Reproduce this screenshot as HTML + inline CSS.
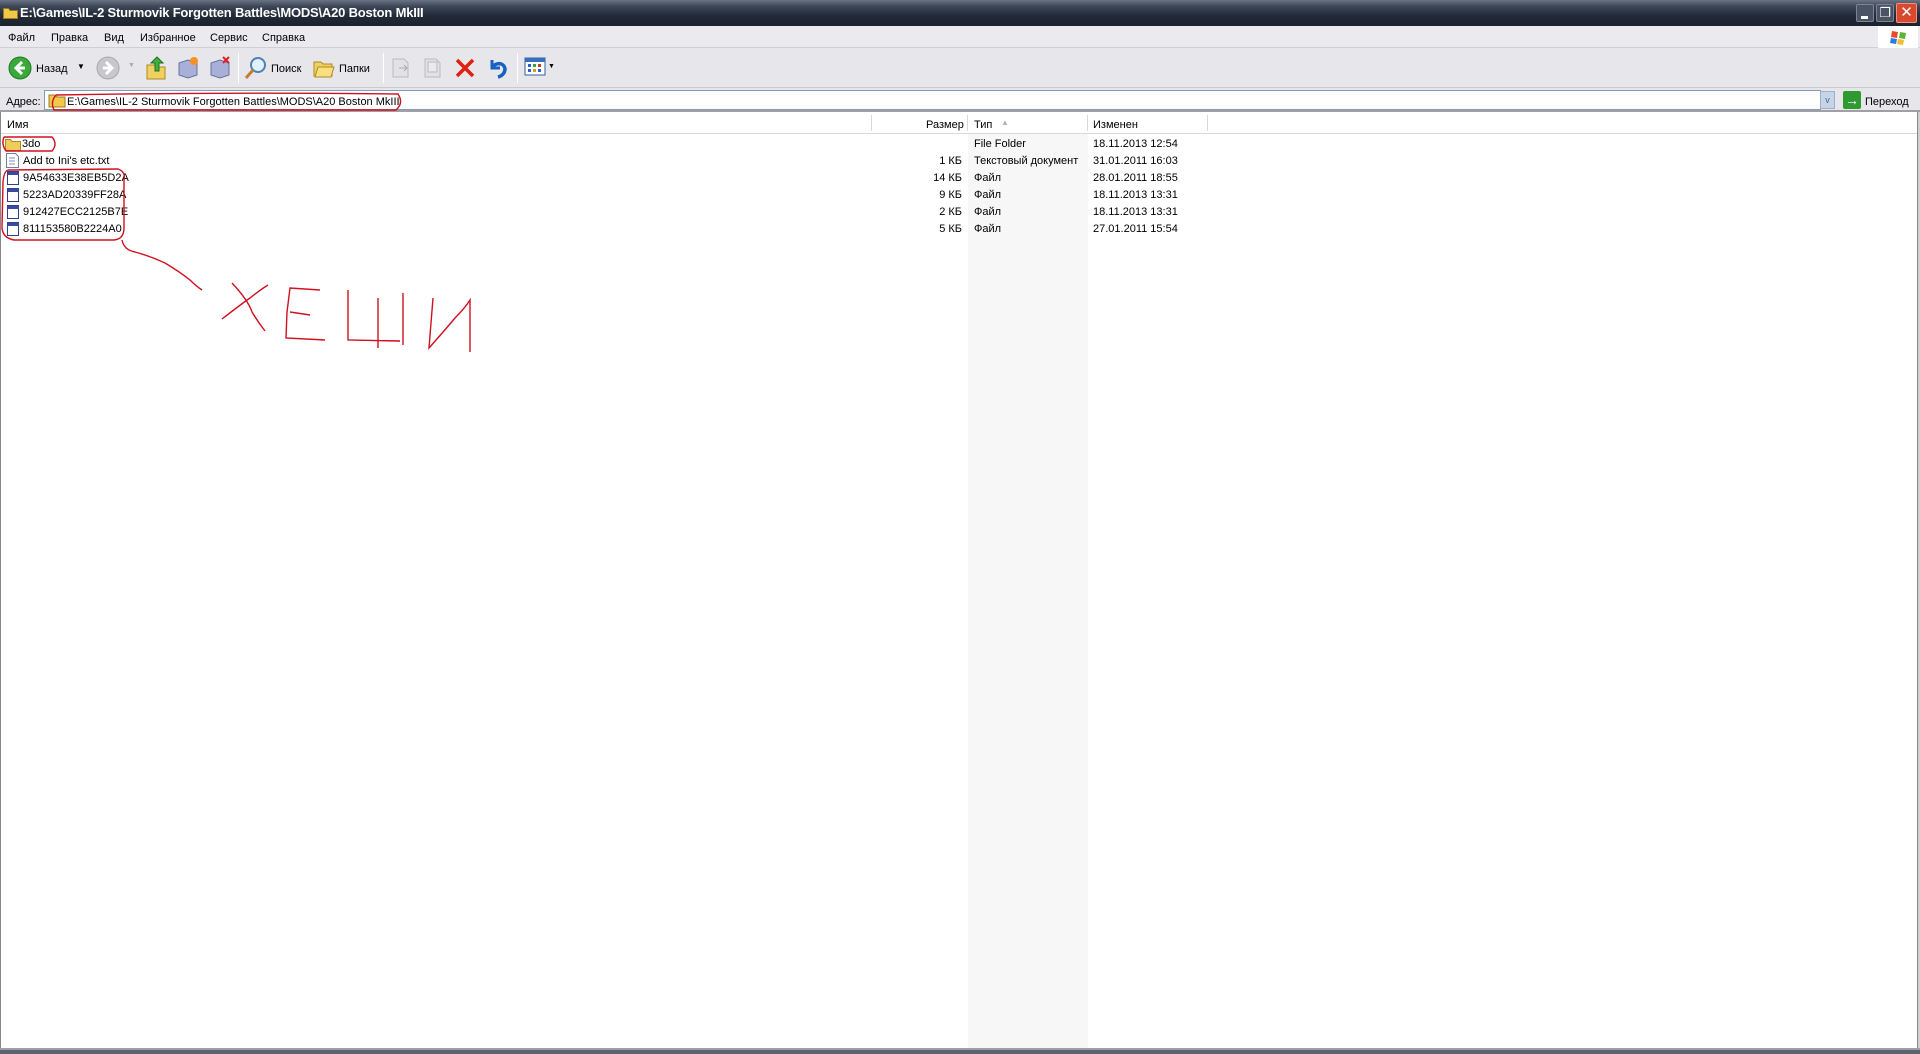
<!DOCTYPE html>
<html><head><meta charset="utf-8"><style>
*{margin:0;padding:0;box-sizing:border-box}
body{width:1920px;height:1054px;overflow:hidden;background:#fff;font-family:"Liberation Sans","DejaVu Sans",sans-serif;font-size:11px;color:#000;position:relative}
.abs{position:absolute}
#title{left:0;top:0;width:1920px;height:26px;background:linear-gradient(#6a7384 0,#3c4656 25%,#222b38 60%,#1b2230 100%)}
#title .t{left:20px;top:5px;color:#fff;font-weight:bold;font-size:13px;letter-spacing:-0.2px}
#menu{left:0;top:26px;width:1920px;height:22px;background:#ebeaee;border-bottom:1px solid #cfcfd4}
#menu span{position:absolute;top:6px}
#tool{left:0;top:48px;width:1920px;height:40px;background:#e7e6ea;border-bottom:1px solid #c9c9ce}
.sep{position:absolute;top:5px;width:1px;height:30px;background:#c4c4c8;border-right:1px solid #fff}
#addr{left:0;top:88px;width:1920px;height:24px;background:#e7e6ea;border-bottom:2px solid #a0a0a4}
#hdr{left:1px;top:112px;width:1916px;height:22px;background:#fff;border-bottom:1px solid #d8d8dc}
#hdr span{position:absolute;top:7px}
.col{position:absolute;top:3px;width:1px;height:16px;background:#d8d8dc}
.row{position:absolute;height:17px;line-height:17px}
</style></head><body>
<div id="title" class="abs">
<svg class="abs" style="left:3px;top:6px" width="15" height="13"><path d="M0.5 2.5h5l1.5 2h7.5v8h-14z" fill="#f0c84a" stroke="#a07a20"/></svg>
<div class="abs t">E:\Games\IL-2 Sturmovik Forgotten Battles\MODS\A20 Boston MkIII</div>
<div class="abs" style="left:1856px;top:4px;width:18px;height:18px;background:#4a5464;border:1px solid #7a8494;border-radius:2px"><div class="abs" style="left:4px;top:11px;width:7px;height:3px;background:#fff"></div></div>
<div class="abs" style="left:1876px;top:4px;width:18px;height:18px;background:#4a5464;border:1px solid #7a8494;border-radius:2px;color:#fff;font-size:13px;line-height:16px;text-align:center">&#x2750;</div>
<div class="abs" style="left:1896px;top:3px;width:21px;height:20px;background:#d9492f;border:1px solid #f09080;border-radius:2px;color:#fff;font-size:15px;font-weight:bold;line-height:18px;text-align:center">✕</div>
</div>
<div id="menu" class="abs">
<span style="left:8px">Файл</span><span style="left:51px">Правка</span><span style="left:104px">Вид</span><span style="left:140px">Избранное</span><span style="left:210px">Сервис</span><span style="left:262px">Справка</span>
<div class="abs" style="left:1878px;top:0;width:40px;height:22px;background:#fff"></div>
<svg class="abs" style="left:1890px;top:3px" width="18" height="16"><path d="M2 2l6 1-1 6-6-1z" fill="#e84a2a"/><path d="M10 3l6 1-1 6-6-1z" fill="#5ab43a"/><path d="M1 9l6 1-1 5-6-1z" fill="#2a7ae0"/><path d="M8 10l6 1-1 5-6-1z" fill="#f0c030"/></svg>
</div>
<div id="tool" class="abs">
<svg class="abs" style="left:8px;top:8px" width="24" height="24"><circle cx="12" cy="12" r="11" fill="#3aa83a" stroke="#1f7a1f"/><path d="M14 6l-6 6 6 6M8 12h9" stroke="#fff" stroke-width="3" fill="none"/></svg>
<span class="abs" style="left:36px;top:15px">Назад</span>
<span class="abs" style="left:77px;top:14px;font-size:8px">▼</span>
<svg class="abs" style="left:96px;top:8px" width="24" height="24"><circle cx="12" cy="12" r="11" fill="#c8c8cc" stroke="#a8a8ac"/><path d="M10 6l6 6-6 6M16 12h-9" stroke="#fff" stroke-width="3" fill="none"/></svg>
<span class="abs" style="left:128px;top:14px;font-size:7px;color:#aaa">▼</span>
<svg class="abs" style="left:145px;top:7px" width="24" height="26"><path d="M2 10h7l2 2h9v12H2z" fill="#f0d060" stroke="#b08a20"/><path d="M12 2l6 6h-4v8h-4V8H6z" fill="#40b040" stroke="#207020"/></svg>
<svg class="abs" style="left:176px;top:7px" width="24" height="26"><path d="M3 8l9-3 9 3v12l-9 3-9-3z" fill="#a8b0d8" stroke="#6870a0"/><circle cx="18" cy="6" r="4" fill="#ff9020"/></svg>
<svg class="abs" style="left:208px;top:7px" width="24" height="26"><path d="M3 8l9-3 9 3v12l-9 3-9-3z" fill="#a8b0d8" stroke="#6870a0"/><path d="M15 2l6 6M21 2l-6 6" stroke="#e02020" stroke-width="2"/></svg>
<div class="sep" style="left:238px"></div>
<svg class="abs" style="left:243px;top:7px" width="26" height="26"><circle cx="15" cy="10" r="7" fill="#e0f0ff" stroke="#5080b0" stroke-width="2"/><path d="M10 15l-7 8" stroke="#c08030" stroke-width="3"/></svg>
<span class="abs" style="left:271px;top:15px">Поиск</span>
<svg class="abs" style="left:312px;top:8px" width="24" height="24"><path d="M2 6h7l2 2h9v12H2z" fill="#f0d060" stroke="#b08a20"/><path d="M6 11h16l-3 10H3z" fill="#f8e080" stroke="#b08a20"/></svg>
<span class="abs" style="left:339px;top:15px">Папки</span>
<div class="sep" style="left:383px"></div>
<svg class="abs" style="left:389px;top:8px" width="24" height="24" opacity=".45"><path d="M4 3h11l4 4v14H4z" fill="#ddd" stroke="#888"/><path d="M10 12h8l-3-3M18 12l-3 3" stroke="#666" fill="none"/></svg>
<svg class="abs" style="left:421px;top:8px" width="24" height="24" opacity=".45"><path d="M4 3h11l4 4v14H4z" fill="#ddd" stroke="#888"/><path d="M7 6h9v10H7z" fill="#eee" stroke="#888"/></svg>
<svg class="abs" style="left:454px;top:9px" width="22" height="22"><path d="M3 3l16 16M19 3L3 19" stroke="#e02010" stroke-width="3.5"/></svg>
<svg class="abs" style="left:486px;top:8px" width="24" height="24"><path d="M6 4v8h8" stroke="#1a60c0" stroke-width="3" fill="none"/><path d="M6 12c3-6 12-6 13 1 0 4-3 7-7 8" stroke="#1a60c0" stroke-width="3.5" fill="none"/></svg>
<div class="sep" style="left:517px"></div>
<svg class="abs" style="left:524px;top:9px" width="22" height="20"><rect x="1" y="1" width="20" height="17" fill="#fff" stroke="#3060a0"/><rect x="1" y="1" width="20" height="4" fill="#3a70c0"/><rect x="4" y="7" width="3" height="3" fill="#3060c0"/><rect x="9" y="7" width="3" height="3" fill="#40a040"/><rect x="14" y="7" width="3" height="3" fill="#c04030"/><rect x="4" y="12" width="3" height="3" fill="#3060c0"/><rect x="9" y="12" width="3" height="3" fill="#d0a020"/><rect x="14" y="12" width="3" height="3" fill="#3060c0"/></svg>
<span class="abs" style="left:548px;top:15px;font-size:7px">▼</span>
</div>
<div id="addr" class="abs">
<span class="abs" style="left:6px;top:8px">Адрес:</span>
<div class="abs" style="left:44px;top:2px;width:1777px;height:20px;background:#fff;border:1px solid #7f9db9"></div>
<svg class="abs" style="left:48px;top:5px" width="18" height="15"><path d="M1 2h6l2 2h8v10H1z" fill="#f0c84a" stroke="#a07a20"/></svg>
<span class="abs" style="left:67px;top:8px">E:\Games\IL-2 Sturmovik Forgotten Battles\MODS\A20 Boston MkIII</span>
<div class="abs" style="left:1820px;top:3px;width:15px;height:18px;background:#c6d4ea;border:1px solid #9cb0d0;color:#4d6185;font-size:9px;text-align:center;line-height:16px">v</div>
<div class="abs" style="left:1843px;top:3px;width:18px;height:18px;background:#2f9a2f;border-radius:2px;color:#fff;font-size:14px;font-weight:bold;line-height:18px;text-align:center">→</div>
<span class="abs" style="left:1865px;top:8px">Переход</span>
</div>
<div class="abs" style="left:0;top:112px;width:1px;height:936px;background:#888"></div>
<div class="abs" style="left:1917px;top:112px;width:3px;height:936px;background:#d0d0d4;border-left:1px solid #888"></div>
<div class="abs" style="left:968px;top:134px;width:120px;height:914px;background:#f7f7f7"></div>
<div id="hdr" class="abs">
<span style="left:6px">Имя</span>
<div class="col" style="left:870px"></div>
<span style="left:925px">Размер</span>
<div class="col" style="left:966px"></div>
<span style="left:973px">Тип</span><span style="left:1000px;top:6px;font-size:8px;color:#b0b0b8">▲</span>
<div class="col" style="left:1086px"></div>
<span style="left:1092px">Изменен</span>
<div class="col" style="left:1206px"></div>
</div>
<div class="abs" style="left:0;top:1048px;width:1920px;height:2px;background:#a0a0a4"></div>
<div class="abs" style="left:0;top:1050px;width:1920px;height:4px;background:#5a6474"></div>

<svg class="abs" style="left:5px;top:137px" width="16" height="14"><path d="M0.5 2.5h5l1.5 2h8.5v9H0.5z" fill="#f0cc5a" stroke="#b08a20"/></svg>
<div class="row" style="left:22px;top:136px">3do</div>
<svg class="abs" style="left:6px;top:153px" width="13" height="15"><path d="M0.5 0.5h9l3 3v11h-12z" fill="#fff" stroke="#7080a0"/><path d="M3 5h6M3 8h6M3 11h6" stroke="#8090b0"/></svg>
<div class="row" style="left:23px;top:153px">Add to Ini's etc.txt</div>
<div class="row" style="left:23px;top:170px">9A54633E38EB5D2A</div>
<div class="row" style="left:23px;top:187px">5223AD20339FF28A</div>
<div class="row" style="left:23px;top:204px">912427ECC2125B7E</div>
<div class="row" style="left:23px;top:221px">811153580B2224A0</div>
<svg class="abs" style="left:7px;top:171px" width="13" height="70"><g fill="#fff" stroke="#30408a"><rect x=".5" y=".5" width="11" height="13"/><rect x=".5" y="17.5" width="11" height="13"/><rect x=".5" y="34.5" width="11" height="13"/><rect x=".5" y="51.5" width="11" height="13"/></g><g fill="#3a4aa0"><rect x="1" y="1" width="11" height="3"/><rect x="1" y="18" width="11" height="3"/><rect x="1" y="35" width="11" height="3"/><rect x="1" y="52" width="11" height="3"/></g></svg>

<div class="abs" style="left:900px;top:153px;width:62px;text-align:right;line-height:17px">1 КБ<br>14 КБ<br>9 КБ<br>2 КБ<br>5 КБ</div>
<div class="abs" style="left:974px;top:136px;line-height:17px">File Folder<br>Текстовый документ<br>Файл<br>Файл<br>Файл<br>Файл</div>
<div class="abs" style="left:1093px;top:136px;line-height:17px">18.11.2013 12:54<br>31.01.2011 16:03<br>28.01.2011 18:55<br>18.11.2013 13:31<br>18.11.2013 13:31<br>27.01.2011 15:54</div>

<svg class="abs" style="left:0;top:0" width="1920" height="1054" fill="none" stroke="#d01020" stroke-width="1.4">
<path d="M56 95 Q50 102 54 110 L396 110 Q404 103 398 94 Q230 92 56 95"/>
<path d="M4 137 L52 137 Q58 144 52 151 L6 151 Q1 144 4 137"/>
<path d="M8 170 L118 169 Q126 172 124 180 L124 228 Q124 239 114 240 L14 240 Q3 238 2 228 L3 182 Q4 171 8 170"/>
<path d="M122 240 Q124 250 135 252 Q150 256 165 263 Q180 272 190 280 Q196 286 202 290"/>
<path d="M232 283 Q248 300 252 312 Q258 322 265 331"/><path d="M222 319 Q240 305 250 298 Q260 290 268 285"/>
<path d="M320 290 L290 288 L287 312 L286 338 L325 340"/><path d="M290 312 L310 315"/>
<path d="M348 290 L348 340 L400 341"/><path d="M378 298 L378 348"/><path d="M403 293 L403 345"/>
<path d="M433 298 L429 348 Q445 330 455 318 Q465 308 470 300 L470 352"/>
</svg>
</body></html>
